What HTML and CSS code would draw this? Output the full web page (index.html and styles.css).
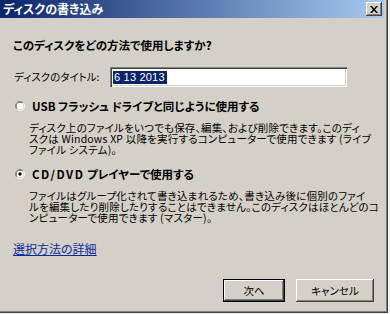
FILE: index.html
```html
<!DOCTYPE html>
<html lang="ja">
<head>
<meta charset="utf-8">
<title>ディスクの書き込み</title>
<link rel="stylesheet" href="styles.css">
</head>
<body>
<div class="window">
  <div class="titlebar">
    <span class="title">ディスクの書き込み</span>
    <span class="close"><svg width="8" height="7" viewBox="0 0 8 7"><path d="M0 0h2l2 2.4L6 0h2L5 3.5 8 7H6L4 4.6 2 7H0l3-3.5z" fill="#000"/></svg></span>
  </div>
  <div class="content">
    <div class="heading">このディスクをどの方法で使用しますか?</div>
    <div class="title-row">
      <span class="field-label">ディスクのタイトル:</span>
      <div class="input"><span class="sel">6 13 2013</span></div>
    </div>
    <div class="radio-row first">
      <svg class="radio" width="10" height="10" viewBox="0 0 12 12">
        <path d="M2.11 9.89A5.5 5.5 0 0 1 9.89 2.11" fill="none" stroke="#808080"/>
        <path d="M9.89 2.11A5.5 5.5 0 0 1 2.11 9.89" fill="none" stroke="#ffffff"/>
        <path d="M2.82 9.18A4.5 4.5 0 0 1 9.18 2.82" fill="none" stroke="#404040"/>
        <path d="M9.18 2.82A4.5 4.5 0 0 1 2.82 9.18" fill="none" stroke="#d4d0c8"/>
        <circle cx="6" cy="6" r="4" fill="#fff"/>
      </svg>
      <span class="opt-label">USB フラッシュ ドライブと同じように使用する</span>
    </div>
    <p class="desc">ディスク上のファイルをいつでも保存、編集、および削除できます。このディ<br>スクは Windows XP 以降を実行するコンピューターで使用できます (ライブ<br>ファイル システム)。</p>
    <div class="radio-row second">
      <svg class="radio" width="10" height="10" viewBox="0 0 12 12">
        <path d="M2.11 9.89A5.5 5.5 0 0 1 9.89 2.11" fill="none" stroke="#808080"/>
        <path d="M9.89 2.11A5.5 5.5 0 0 1 2.11 9.89" fill="none" stroke="#ffffff"/>
        <path d="M2.82 9.18A4.5 4.5 0 0 1 9.18 2.82" fill="none" stroke="#404040"/>
        <path d="M9.18 2.82A4.5 4.5 0 0 1 2.82 9.18" fill="none" stroke="#d4d0c8"/>
        <circle cx="6" cy="6" r="4" fill="#fff"/>
        <circle cx="6" cy="6" r="2" fill="#000"/>
      </svg>
      <span class="opt-label"><span class="lat">CD/DVD</span> プレイヤーで使用する</span>
    </div>
    <p class="desc">ファイルはグループ化されて書き込まれるため、書き込み後に個別のファイ<br>ルを編集したり削除したりすることはできません。このディスクはほとんどのコ<br>ンピューターで使用できます (マスター)。</p>
    <a class="link" href="#">選択方法の詳細</a>
    <div class="buttons">
      <button class="btn default"><span class="btn-face">次へ</span></button>
      <button class="btn cancel"><span class="btn-face">キャンセル</span></button>
    </div>
  </div>
</div>
</body>
</html>
```

FILE: styles.css
```css
html, body {
  margin: 0;
  padding: 0;
}
body {
  background: #f2f2f2;
  font-family: "Noto Sans CJK JP", "Noto Sans", sans-serif;
  font-size: 10.5px;
  color: #000;
  font-feature-settings: "palt";
}
.window {
  width: 388px;
  height: 313px;
  box-sizing: border-box;
  padding: 0 4px 4px 0;
  background: #d4d0c8;
  box-shadow: inset -1px -1px 0 #404040, inset -2px -2px 0 #808080;
  display: flex;
  flex-direction: column;
}
.titlebar {
  height: 18px;
  flex: none;
  background: linear-gradient(to right, #0a246a, #a6caf0);
  display: flex;
  align-items: center;
  justify-content: space-between;
  padding: 0 2px 0 3px;
}
.title {
  color: #fff;
  font-weight: bold;
  font-size: 12px;
  line-height: 14px;
}
.close {
  width: 16px;
  height: 14px;
  box-sizing: border-box;
  background: #d4d0c8;
  box-shadow: inset -1px -1px 0 #404040, inset 1px 1px 0 #ffffff, inset -2px -2px 0 #808080;
  display: flex;
  align-items: center;
  justify-content: center;
}
.close svg {
  display: block;
  margin-left: -1px;
}
.content {
  flex: 1;
  padding-left: 13px;
  display: flex;
  flex-direction: column;
}
.heading {
  margin-top: 20px;
  font-weight: bold;
  font-size: 11.5px;
  line-height: 14px;
}
.title-row {
  margin-top: 15px;
  display: flex;
  align-items: center;
  height: 20px;
}
.field-label {
  margin-left: 1px;
  width: 96px;
  line-height: 12px;
}
.input {
  width: 237px;
  height: 20px;
  box-sizing: border-box;
  background: #fff;
  box-shadow: inset 1px 1px 0 #808080, inset 2px 2px 0 #404040, inset -1px -1px 0 #ffffff, inset -2px -2px 0 #d4d0c8;
  padding: 2px 3px;
  display: flex;
  align-items: center;
}
.sel {
  background: #0a246a;
  color: #fff;
  font-family: "Liberation Sans", Arial, sans-serif;
  font-size: 11px;
  line-height: 13px;
  height: 13px;
  padding: 0 2px 0 1px;
  letter-spacing: 0.2px;
}
.radio-row {
  display: flex;
  align-items: center;
  height: 12px;
}
.radio-row.first {
  margin-top: 13px;
}
.radio-row.second {
  margin-top: 13px;
}
.radio {
  display: block;
  margin-left: 2px;
  margin-right: 7px;
}
.opt-label {
  font-weight: bold;
  font-size: 11.5px;
  line-height: 12px;
}
.lat {
  letter-spacing: 1.5px;
}
.desc {
  margin: 10px 0 0 16px;
  line-height: 11px;
  white-space: nowrap;
  letter-spacing: 0.2px;
}
.link {
  margin-top: 20px;
  align-self: flex-start;
  color: #0b2b9a;
  text-decoration: underline;
  font-size: 12px;
  line-height: 12px;
}
.buttons {
  margin-top: 24px;
  display: flex;
  justify-content: flex-end;
  gap: 11px;
  padding-right: 10px;
}
.btn {
  margin: 0;
  padding: 0;
  border: none;
  background: #d4d0c8;
  font-family: inherit;
  font-size: 10.5px;
  font-feature-settings: "palt";
  color: #000;
  height: 23px;
  box-sizing: border-box;
  box-shadow: inset -1px -1px 0 #404040, inset 1px 1px 0 #ffffff, inset -2px -2px 0 #808080;
}
.btn.default {
  width: 62px;
  border: 1px solid #000;
}
.btn.cancel {
  width: 78px;
}
.btn-face {
  display: block;
  line-height: 12px;
}
```
